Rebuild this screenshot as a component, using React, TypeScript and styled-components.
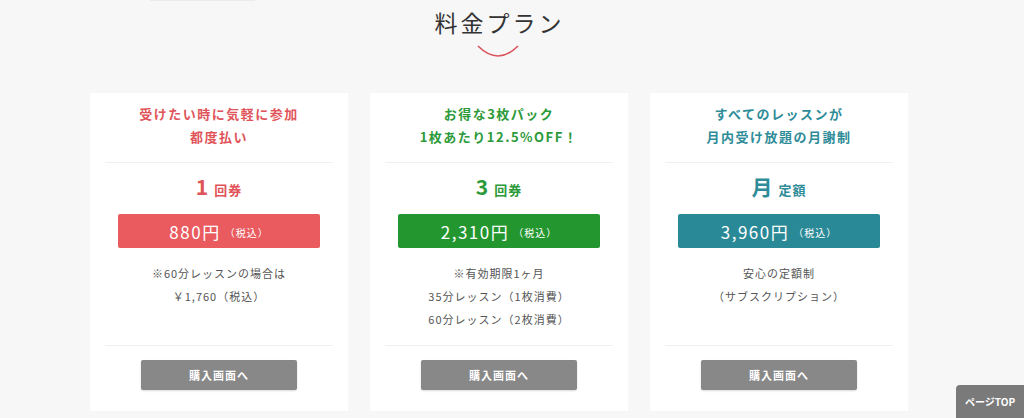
import React from "react";
import styled, { createGlobalStyle } from "styled-components";

const Global = createGlobalStyle`
  html, body { margin: 0; padding: 0; background: #f7f7f7; }
  body { font-family: "Noto Sans CJK JP", "Noto Sans", sans-serif; width: 1024px; height: 418px; overflow: hidden; }
`;

const Page = styled.div`
  position: relative;
  width: 1024px;
  height: 418px;
  background: #f7f7f7;
  overflow: hidden;
`;

const TopEdge = styled.div`
  width: 105px;
  height: 1px;
  margin-left: 150px;
  background: #ebebeb;
`;

const TitleBlock = styled.div`
  display: flex;
  flex-direction: column;
  align-items: center;
  width: 996px;
  padding-top: 5px;
`;

const Title = styled.h2`
  margin: 0;
  font-size: 23px;
  line-height: 32px;
  font-weight: 400;
  letter-spacing: 3px;
  color: #333;
  padding-left: 3px;
`;

const Smile = styled.svg`
  display: block;
  margin-top: 6px;
`;

const Cards = styled.div`
  display: flex;
  gap: 22px;
  padding-left: 90px;
  margin-top: 35px;
`;

const Card = styled.section`
  width: 258px;
  background: #fff;
  box-sizing: border-box;
  padding: 9px 15px 21px;
  display: flex;
  flex-direction: column;
  align-items: center;
`;

const Catch = styled.p<{ $c: string }>`
  margin: 0;
  font-size: 13px;
  line-height: 23px;
  font-weight: 700;
  letter-spacing: 1.5px;
  text-align: center;
  color: ${(p) => p.$c};
`;

const Divider = styled.hr`
  width: 100%;
  border: 0;
  height: 1px;
  background: #f0f0f0;
  margin: 14px 0 0;
`;

const Kind = styled.div<{ $c: string }>`
  margin-top: 10px;
  color: ${(p) => p.$c};
  font-weight: 700;
  line-height: 26px;
  display: flex;
  align-items: baseline;
  gap: 6px;
`;

const KindBig = styled.span`
  font-size: 21px;
`;

const KindSmall = styled.span`
  font-size: 13px;
  letter-spacing: 1px;
`;

const Price = styled.div<{ $bg: string }>`
  margin-top: 11px;
  width: 202px;
  height: 34px;
  border-radius: 2px;
  background: ${(p) => p.$bg};
  color: #fff;
  display: flex;
  align-items: center;
  justify-content: center;
  gap: 4px;
`;

const PriceNum = styled.span`
  font-size: 17px;
  font-weight: 400;
  letter-spacing: 1.5px;
`;

const Tax = styled.span`
  font-size: 10px;
  letter-spacing: 1px;
  margin-top: 2px;
`;

const Notes = styled.div`
  margin-top: 14px;
  height: 69px;
  font-size: 11px;
  line-height: 23px;
  letter-spacing: 1px;
  color: #555;
  text-align: center;
`;

const Buy = styled.button`
  margin-top: 14px;
  width: 156px;
  height: 30px;
  border: 0;
  border-radius: 2px;
  background: #888;
  color: #fff;
  font-family: inherit;
  font-size: 11px;
  font-weight: 700;
  letter-spacing: 1px;
  box-shadow: 0 1px 2px rgba(0,0,0,0.15);
`;

const PageTop = styled.button`
  position: absolute;
  right: 0;
  bottom: 0;
  width: 68px;
  height: 33px;
  border: 0;
  border-radius: 4px 0 0 0;
  background: #7a7a7a;
  color: #fff;
  font-family: inherit;
  font-size: 10px;
  font-weight: 700;
`;

const plans = [
  {
    c: "#e05459",
    bg: "#e95b5f",
    catch: ["受けたい時に気軽に参加", "都度払い"],
    big: "1",
    small: "回券",
    price: "880円",
    notes: ["※60分レッスンの場合は", "￥1,760（税込）"],
  },
  {
    c: "#2d9a3a",
    bg: "#23962f",
    catch: ["お得な3枚パック", "1枚あたり12.5%OFF！"],
    big: "3",
    small: "回券",
    price: "2,310円",
    notes: ["※有効期限1ヶ月", "35分レッスン（1枚消費）", "60分レッスン（2枚消費）"],
  },
  {
    c: "#2e8c98",
    bg: "#2a8996",
    catch: ["すべてのレッスンが", "月内受け放題の月謝制"],
    big: "月",
    small: "定額",
    price: "3,960円",
    notes: ["安心の定額制", "（サブスクリプション）"],
  },
];

export default function App() {
  return (
    <Page>
      <Global />
      <TopEdge />
      <TitleBlock>
        <Title>料金プラン</Title>
        <Smile width="44" height="14" viewBox="0 0 44 14">
          <path d="M2 2 Q22 22 42 2" fill="none" stroke="#d9545c" strokeWidth="1.6" />
        </Smile>
      </TitleBlock>
      <Cards>
        {plans.map((p) => (
          <Card key={p.price}>
            <Catch $c={p.c}>
              {p.catch[0]}
              <br />
              {p.catch[1]}
            </Catch>
            <Divider />
            <Kind $c={p.c}>
              <KindBig>{p.big}</KindBig>
              <KindSmall>{p.small}</KindSmall>
            </Kind>
            <Price $bg={p.bg}>
              <PriceNum>{p.price}</PriceNum>
              <Tax>（税込）</Tax>
            </Price>
            <Notes>
              {p.notes.map((n) => (
                <div key={n}>{n}</div>
              ))}
            </Notes>
            <Divider />
            <Buy>購入画面へ</Buy>
          </Card>
        ))}
      </Cards>
      <PageTop>ページTOP</PageTop>
    </Page>
  );
}
